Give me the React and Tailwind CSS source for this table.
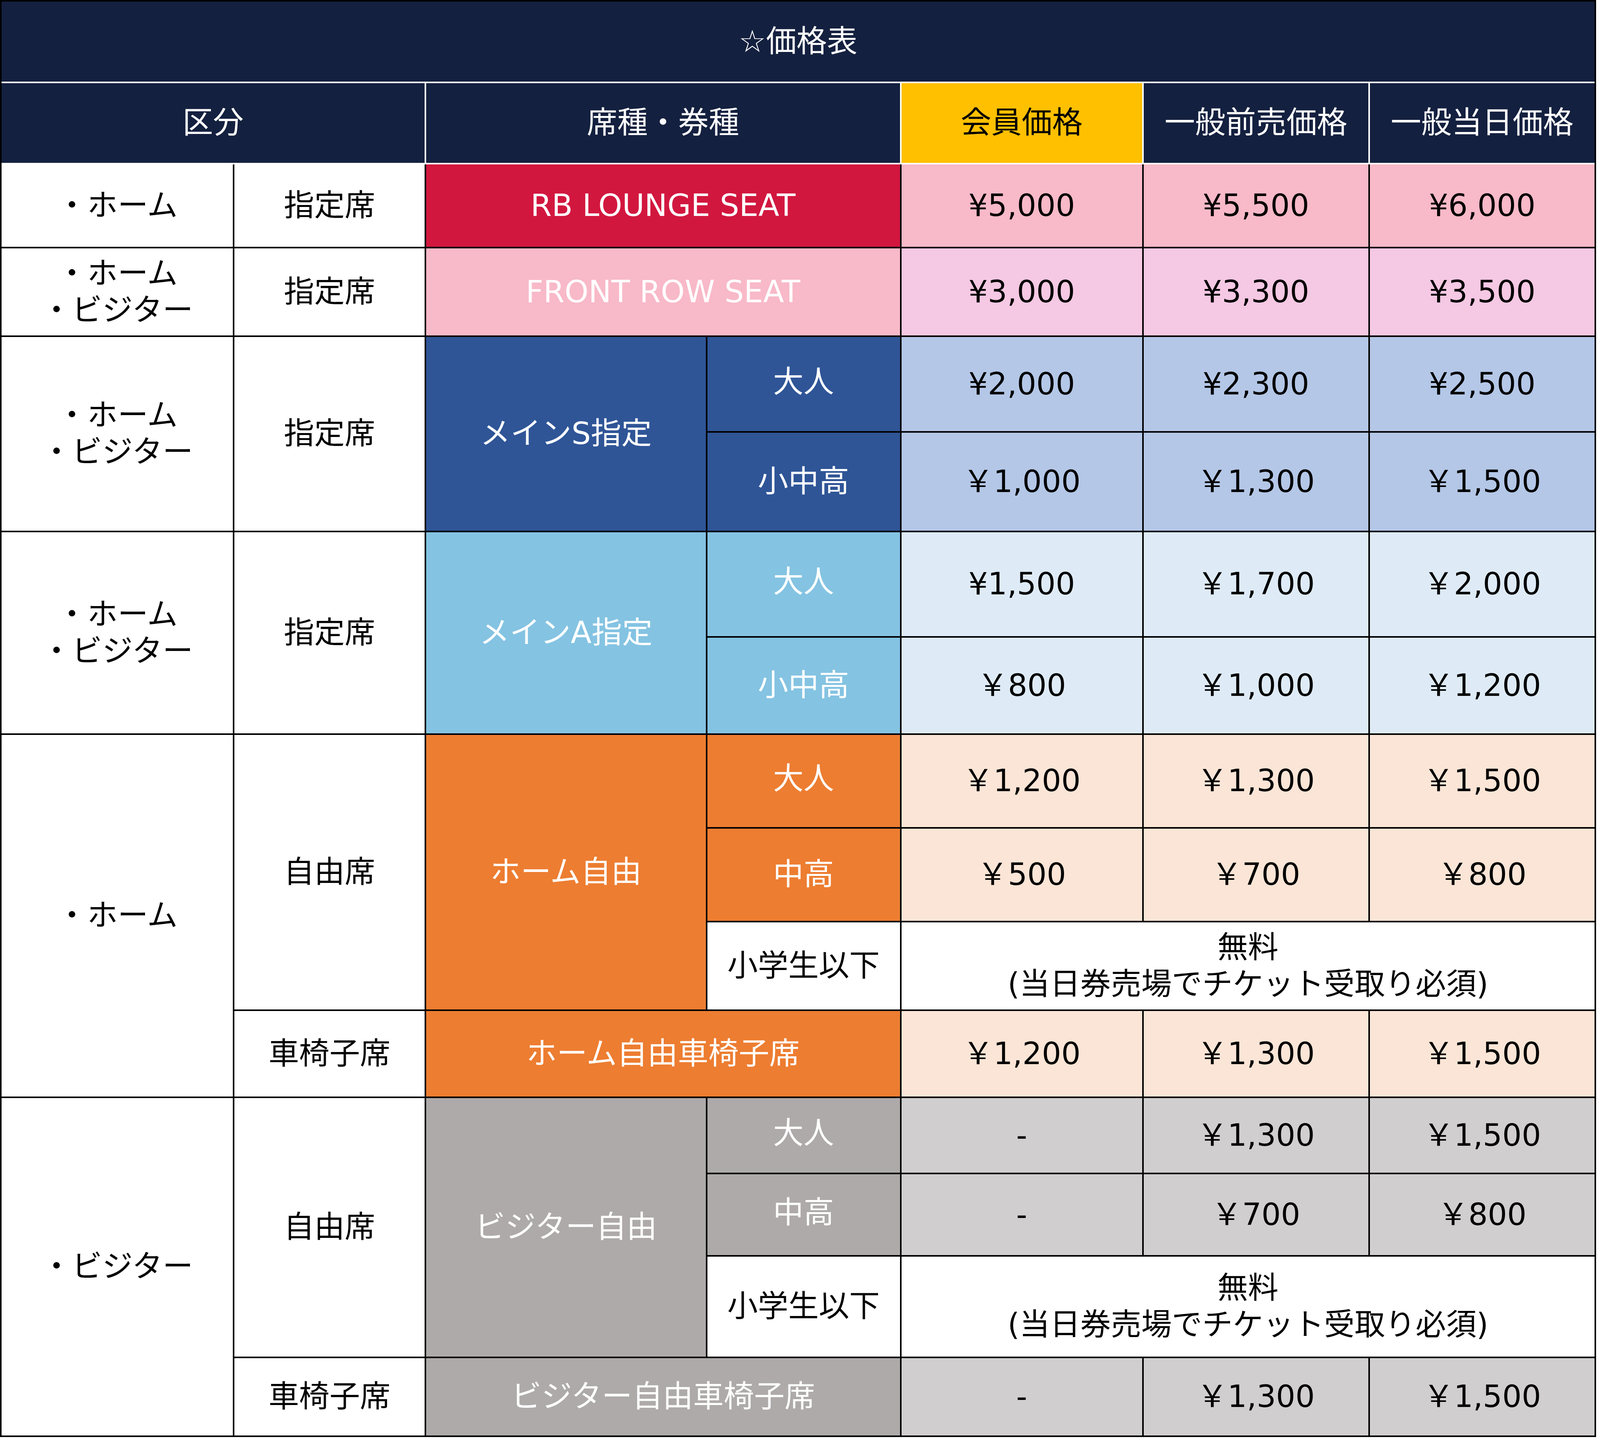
import React from 'react';

// price table colours
const NAVY = 'bg-[#14203f]';
const COLS = 'grid-cols-[671fr_552fr_811fr_559fr_698fr_652fr_652fr]';

function Cell({ className = '', children }) {
  return (
    <div
      className={`flex items-center justify-center text-center leading-[1.2] ${className}`}
    >
      {children}
    </div>
  );
}

function PriceRow({ bg, values }) {
  return values.map((v, i) => (
    <Cell key={i} className={`${bg} text-black`}>
      {v}
    </Cell>
  ));
}

function Free() {
  return (
    <Cell className="col-span-3 bg-white text-black">
      <div>
        無料
        <br />
        (当日券売場でチケット受取り必須)
      </div>
    </Cell>
  );
}

function HomeVisitor() {
  return (
    <div>
      ・ホーム
      <br />
      ・ビジター
    </div>
  );
}

export default function App() {
  return (
    <div className="bg-white w-full h-[3685px]">
      <div className="w-[calc(100%-10px)] border-[4px] border-black font-['DejaVu_Sans','Noto_Sans_CJK_JP',sans-serif] text-[78px]">
        {/* title */}
        <div className={`${NAVY} h-[205px] flex items-center justify-center text-white`}>
          ☆価格表
        </div>

        {/* header */}
        <div className={`grid ${COLS} gap-x-[4px] bg-white border-y-[4px] border-white h-[212px]`}>
          <Cell className={`col-span-2 ${NAVY} text-white`}>区分</Cell>
          <Cell className={`col-span-2 ${NAVY} text-white`}>席種・券種</Cell>
          <Cell className="bg-[#ffc000] text-black">会員価格</Cell>
          <Cell className={`${NAVY} text-white`}>一般前売価格</Cell>
          <Cell className={`${NAVY} text-white`}>一般当日価格</Cell>
        </div>

        {/* body */}
        <div
          className={`grid ${COLS} grid-rows-[211px_223px_241px_251px_266px_245px_236px_236px_223px_219px_191px_207px_256px_198px] gap-[4px] bg-black`}
        >
          {/* RB lounge */}
          <Cell className="bg-white">・ホーム</Cell>
          <Cell className="bg-white">指定席</Cell>
          <Cell className="col-span-2 bg-[#d2173f] text-white">RB LOUNGE SEAT</Cell>
          <PriceRow bg="bg-[#f8b9c8]" values={['¥5,000', '¥5,500', '¥6,000']} />

          {/* front row */}
          <Cell className="bg-white">
            <HomeVisitor />
          </Cell>
          <Cell className="bg-white">指定席</Cell>
          <Cell className="col-span-2 bg-[#f8b9c8] text-white">FRONT ROW SEAT</Cell>
          <PriceRow bg="bg-[#f5c8e3]" values={['¥3,000', '¥3,300', '¥3,500']} />

          {/* main S */}
          <Cell className="row-span-2 bg-white">
            <HomeVisitor />
          </Cell>
          <Cell className="row-span-2 bg-white">指定席</Cell>
          <Cell className="row-span-2 bg-[#2f5597] text-white">メインS指定</Cell>
          <Cell className="bg-[#2f5597] text-white pb-[10px]">大人</Cell>
          <PriceRow bg="bg-[#b4c7e7]" values={['¥2,000', '¥2,300', '¥2,500']} />
          <Cell className="bg-[#2f5597] text-white">小中高</Cell>
          <PriceRow bg="bg-[#b4c7e7]" values={['￥1,000', '￥1,300', '￥1,500']} />

          {/* main A */}
          <Cell className="row-span-2 bg-white">
            <HomeVisitor />
          </Cell>
          <Cell className="row-span-2 bg-white">指定席</Cell>
          <Cell className="row-span-2 bg-[#84c3e2] text-white">メインA指定</Cell>
          <Cell className="bg-[#84c3e2] text-white pb-[10px]">大人</Cell>
          <PriceRow bg="bg-[#deebf7]" values={['¥1,500', '￥1,700', '￥2,000']} />
          <Cell className="bg-[#84c3e2] text-white">小中高</Cell>
          <PriceRow bg="bg-[#deebf7]" values={['￥800', '￥1,000', '￥1,200']} />

          {/* home free */}
          <Cell className="row-span-4 bg-white">・ホーム</Cell>
          <Cell className="row-span-3 bg-white">自由席</Cell>
          <Cell className="row-span-3 bg-[#ed7d31] text-white">ホーム自由</Cell>
          <Cell className="bg-[#ed7d31] text-white pb-[10px]">大人</Cell>
          <PriceRow bg="bg-[#fbe5d6]" values={['￥1,200', '￥1,300', '￥1,500']} />
          <Cell className="bg-[#ed7d31] text-white">中高</Cell>
          <PriceRow bg="bg-[#fbe5d6]" values={['￥500', '￥700', '￥800']} />
          <Cell className="bg-white">小学生以下</Cell>
          <Free />
          <Cell className="bg-white">車椅子席</Cell>
          <Cell className="col-span-2 bg-[#ed7d31] text-white">ホーム自由車椅子席</Cell>
          <PriceRow bg="bg-[#fbe5d6]" values={['￥1,200', '￥1,300', '￥1,500']} />

          {/* visitor free */}
          <Cell className="row-span-4 bg-white">・ビジター</Cell>
          <Cell className="row-span-3 bg-white">自由席</Cell>
          <Cell className="row-span-3 bg-[#aeaaaa] text-white">ビジター自由</Cell>
          <Cell className="bg-[#aeaaaa] text-white pb-[10px]">大人</Cell>
          <PriceRow bg="bg-[#d0cece]" values={['-', '￥1,300', '￥1,500']} />
          <Cell className="bg-[#aeaaaa] text-white pb-[10px]">中高</Cell>
          <PriceRow bg="bg-[#d0cece]" values={['-', '￥700', '￥800']} />
          <Cell className="bg-white">小学生以下</Cell>
          <Free />
          <Cell className="bg-white">車椅子席</Cell>
          <Cell className="col-span-2 bg-[#aeaaaa] text-white">ビジター自由車椅子席</Cell>
          <PriceRow bg="bg-[#d0cece]" values={['-', '￥1,300', '￥1,500']} />
        </div>
      </div>
    </div>
  );
}
